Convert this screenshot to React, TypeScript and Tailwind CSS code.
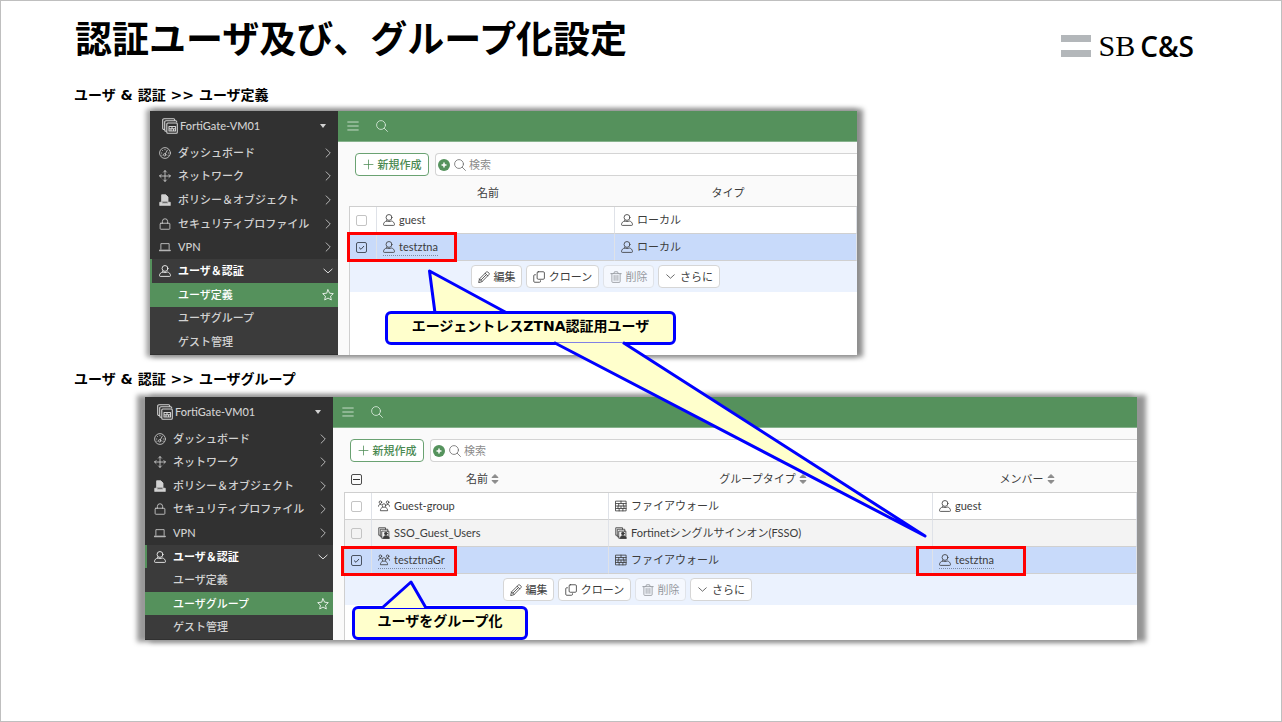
import { type ReactNode } from 'react'
import clsx from 'clsx'

type IconProps = { className?: string }

function Svg({ className, children }: IconProps & { children: ReactNode }) {
  return (
    <svg
      viewBox="0 0 16 16"
      fill="none"
      stroke="currentColor"
      strokeWidth="1.1"
      strokeLinecap="round"
      strokeLinejoin="round"
      className={clsx('shrink-0', className ?? 'size-3')}
      aria-hidden="true"
    >
      {children}
    </svg>
  )
}

const UserIcon = ({ className }: IconProps) => (
  <Svg className={className}>
    <circle cx="8" cy="4.6" r="3.9" />
    <path d="M5 9.300C2.400 9.800.8 11.600.7 14c0 .8.3 1.200 1.100 1.200h12.400c.8 0 1.100-.4 1.100-1.200-.1-2.400-1.700-4.200-4.300-4.700-1.800 1-4.200 1-6 0z" />
  </Svg>
)

const GroupIcon = ({ className }: IconProps) => (
  <Svg className={className}>
    <circle cx="3.200" cy="3" r="1.700" />
    <circle cx="12.800" cy="3" r="1.700" />
    <circle cx="8" cy="7.400" r="2.400" />
    <path d="M.6 8.300c0-1.800 1-2.700 3.600-2.300M15.400 8.300c0-1.800-1-2.700-3.600-2.300M5.800 10c-1.800.5-2.600 1.900-2.600 4.300h9.600c0-2.400-.8-3.800-2.600-4.300" />
  </Svg>
)

const SsoIcon = ({ className }: IconProps) => (
  <Svg className={className}>
    <path d="M3 11H1V1h9v2M5 13H3V3h10v3M5.500 5.500h9v9.500h-9z" />
    <circle cx="10.500" cy="8.700" r="1.800" fill="currentColor" />
    <path d="M7 15c0-2.500 1.500-3.500 3.500-3.500s4.500 1 4.500 3.500z" fill="currentColor" />
  </Svg>
)

const FirewallIcon = ({ className }: IconProps) => (
  <Svg className={className}>
    <path d="M1.200 1.500h13.600v13H1.200zM1.200 4.700h13.600M1.200 8h13.600M1.200 11.300h13.600M8 1.500v3.200M5 4.700V8M11 4.700V8M8 8v3.300M4 8v3.300M12 8v3.300M5.500 11.300v3.200M10.500 11.300v3.200" />
  </Svg>
)

const DeviceIcon = ({ className }: IconProps) => (
  <Svg className={className}>
    <path d="M2.600 11.500H2a1.300 1.300 0 0 1-1.300-1.300V2A1.300 1.300 0 0 1 2 .7h9.500A1.300 1.300 0 0 1 12.800 2M4.300 13.300H4A1.300 1.300 0 0 1 2.700 12V4A1.300 1.300 0 0 1 4 2.700h9.500A1.300 1.300 0 0 1 14.800 4" />
    <rect x="4.800" y="5" width="10.500" height="10.300" rx="1" />
    <path d="M7 8.500h6.500v4.500H7zM7 10.700h6.500M10 8.500v2.200M9 10.700V13M11.500 10.700V13" />
  </Svg>
)

const GaugeIcon = ({ className }: IconProps) => (
  <Svg className={className}>
    <circle cx="8" cy="8" r="7.200" />
    <circle cx="7.600" cy="10.400" r="1.600" />
    <path d="M8.500 9l2.600-4.800M3.300 8h.4M4.700 4.700l.3.300M8 3.300v.4M12.300 8h.4M3.800 11h.3M12 11h.3" />
  </Svg>
)

const MoveIcon = ({ className }: IconProps) => (
  <Svg className={className}>
    <path d="M8 .8v14.400M.8 8h14.400M6 2.800L8 .8l2 2M6 13.200l2 2 2-2M2.800 6L.8 8l2 2M13.200 6l2 2-2 2" />
  </Svg>
)

const PolicyIcon = ({ className }: IconProps) => (
  <Svg className={className}>
    <path d="M3.500 10V1H9l3 3v6z" fill="currentColor" />
    <path d="M1 15v-4h3l1 1.500h6l1-1.500h3v4z" fill="currentColor" />
  </Svg>
)

const LockIcon = ({ className }: IconProps) => (
  <Svg className={className}>
    <rect x="1.500" y="7" width="13" height="8" rx="1" />
    <path d="M4.500 7V4.500a3.500 3.500 0 0 1 7 0V7" />
  </Svg>
)

const LaptopIcon = ({ className }: IconProps) => (
  <Svg className={className}>
    <path d="M2.500 11V3.500h11V11M.8 13h14.400v-.8H.8z" />
  </Svg>
)

const StarIcon = ({ className }: IconProps) => (
  <Svg className={className}>
    <path d="M8 1l2.100 4.600 5 .6-3.700 3.400 1 5L8 12.100l-4.400 2.500 1-5L.9 6.200l5-.6z" />
  </Svg>
)

const SearchIcon = ({ className }: IconProps) => (
  <Svg className={className}>
    <circle cx="6.700" cy="6.700" r="5.900" />
    <path d="M11 11l4.300 4.300" />
  </Svg>
)

const MenuIcon = ({ className }: IconProps) => (
  <Svg className={className}>
    <path d="M1 2.700h14M1 8h14M1 13.300h14" />
  </Svg>
)

const ChevronRight = ({ className }: IconProps) => (
  <Svg className={className}>
    <path d="M5.500 2.500L11 8l-5.500 5.500" />
  </Svg>
)

const ChevronDown = ({ className }: IconProps) => (
  <Svg className={className}>
    <path d="M2.500 5.500L8 10.500l5.500-5" />
  </Svg>
)

const PlusIcon = ({ className }: IconProps) => (
  <Svg className={className}>
    <path d="M8 1.500v13M1.500 8h13" />
  </Svg>
)

const AddFilterIcon = ({ className }: IconProps) => (
  <svg viewBox="0 0 16 16" className={clsx('shrink-0', className)} aria-hidden="true">
    <circle cx="8" cy="8" r="8" fill="#55935d" />
    <path d="M8 4.700v6.600M4.700 8h6.600" stroke="#fff" strokeWidth="2" />
  </svg>
)

const PencilIcon = ({ className }: IconProps) => (
  <Svg className={className}>
    <path d="M1 15l1-4.500L11.300 1.300a1.200 1.200 0 0 1 1.700 0l1.700 1.700a1.200 1.200 0 0 1 0 1.700L5.500 14zM9.500 3l3.500 3.500M3.800 12.200l6.700-6.700M2 10.500L5.500 14" />
  </Svg>
)

const CloneIcon = ({ className }: IconProps) => (
  <Svg className={className}>
    <rect x="5.500" y="1" width="9.700" height="10" rx="1.500" />
    <path d="M3.300 5h-1A1.300 1.300 0 0 0 1 6.300v7.400A1.300 1.300 0 0 0 2.300 15h6.400a1.300 1.300 0 0 0 1.300-1.300V13" />
  </Svg>
)

const TrashIcon = ({ className }: IconProps) => (
  <Svg className={className}>
    <path d="M1 3.500h14M5 3.500L6 1h4l1 2.500M2.500 3.500V14a1.200 1.200 0 0 0 1.200 1.200h8.600a1.200 1.200 0 0 0 1.200-1.200V3.500M5.500 6v6.500M8 6v6.500M10.500 6v6.500" />
  </Svg>
)

const SortIcon = () => (
  <svg
    viewBox="0 0 8 12"
    className="h-3 w-2 shrink-0 fill-[#8b8b8b] stroke-[#8b8b8b]"
    strokeLinejoin="round"
    aria-hidden="true"
  >
    <path d="M4 1.500L7 4.500H1zM4 10.500L1 7.500h6z" />
  </svg>
)

const menu = [
  { label: 'ダッシュボード', Icon: GaugeIcon },
  { label: 'ネットワーク', Icon: MoveIcon },
  { label: 'ポリシー＆オブジェクト', Icon: PolicyIcon },
  { label: 'セキュリティプロファイル', Icon: LockIcon },
  { label: 'VPN', Icon: LaptopIcon },
]

const subMenu = ['ユーザ定義', 'ユーザグループ', 'ゲスト管理']

function Sidebar({ active }: { active: string }) {
  return (
    <nav className="flex w-[188px] shrink-0 flex-col bg-[#313131] pb-px text-[#d2d2d2]">
      <button className="flex h-[30px] items-center pr-3 pl-3 text-left font-medium">
        <DeviceIcon className="size-4" />
        <span className="ml-0.5 flex-1">FortiGate-VM01</span>
        <svg viewBox="0 0 6 4" className="h-1 w-1.5 fill-current" aria-hidden="true">
          <path d="M0 0h6L3 4z" />
        </svg>
      </button>
      <ul className="grid flex-1 auto-rows-fr">
        {menu.map(({ label, Icon }) => (
          <li key={label} className="flex">
            <a href="#" className="flex flex-1 items-center pr-1 pl-[9px]">
              <Icon />
              <span className="ml-[7px] flex-1 font-medium whitespace-nowrap">{label}</span>
              <ChevronRight />
            </a>
          </li>
        ))}
        <li className="flex bg-[#3b3b3b]">
          <a
            href="#"
            className="flex flex-1 items-center border-l-2 border-[#55915c] pr-1 pl-[7px] font-bold text-white"
          >
            <UserIcon />
            <span className="ml-[7px] flex-1">ユーザ＆認証</span>
            <ChevronDown />
          </a>
        </li>
        {subMenu.map((label) => (
          <li key={label} className={clsx('flex', label === active ? 'bg-[#55915c]' : 'bg-[#3b3b3b]')}>
            <a
              href="#"
              className={clsx(
                'flex flex-1 items-center justify-between pr-1 pl-7 font-medium',
                label === active && 'text-white',
              )}
            >
              {label}
              {label === active && <StarIcon />}
            </a>
          </li>
        ))}
      </ul>
    </nav>
  )
}

function Toolbar() {
  return (
    <div className="flex gap-1.5 pt-[11px] pl-[17px]">
      <button className="flex h-[23px] w-[74px] items-center justify-center gap-1 rounded border border-[#6aa272] bg-white font-medium text-[#4a8a52]">
        <PlusIcon className="size-[11px]" />
        新規作成
      </button>
      <div className="flex h-[23px] min-w-0 flex-1 items-center rounded-l border-y border-l border-[#d4d4d4] bg-white pl-0.5">
        <AddFilterIcon className="size-3" />
        <SearchIcon className="ml-1 size-3 text-[#707070]" />
        <input
          type="search"
          aria-label="検索"
          placeholder="検索"
          className="ml-[3px] min-w-0 flex-1 outline-none placeholder:text-[#8c8c8c]"
        />
      </div>
    </div>
  )
}

function Check({ label, checked }: { label: string; checked?: boolean }) {
  return (
    <span className="relative block size-[11px]">
      <input
        type="checkbox"
        aria-label={label}
        defaultChecked={checked}
        className="block size-[11px] appearance-none rounded-[2px] border border-[#c4c4c4] checked:border-[#4a5361]"
      />
      {checked && (
        <svg
          viewBox="0 0 11 11"
          className="pointer-events-none absolute inset-0 size-[11px] fill-none stroke-[#3d4653]"
          aria-hidden="true"
        >
          <path d="M3 5.500l2 1.800 3-3.300" />
        </svg>
      )}
    </span>
  )
}

type Cell = { text: string; Icon?: (p: IconProps) => ReactNode; underline?: boolean }
type Row = { cells: Cell[]; selected?: boolean; striped?: boolean }

type DataTableProps = {
  columns: { label: string; width?: string }[]
  rows: Row[]
  sortable?: boolean
}

function DataTable({ columns, rows, sortable }: DataTableProps) {
  return (
    <table className="w-full table-fixed border-separate border-spacing-0 text-left text-[#3c3c3c]">
      <thead>
        <tr className="h-[31px]">
          <th className="w-7 border-b border-[#cfcfcf] pt-1 pl-[7px]">
            {sortable && (
              <span className="relative block size-[11px]">
                <input
                  type="checkbox"
                  aria-label="すべて選択"
                  className="block size-[11px] appearance-none rounded-[2px] border border-[#4c4c4c]"
                />
                <span className="pointer-events-none absolute top-[5px] left-0.5 h-px w-[7px] bg-[#333]" />
              </span>
            )}
          </th>
          {columns.map(({ label, width }) => (
            <th key={label} className={clsx('border-b border-[#cfcfcf] pt-1 pr-4 font-normal', width)}>
              <span className="flex items-center justify-center gap-[3px]">
                {label}
                {sortable && <SortIcon />}
              </span>
            </th>
          ))}
        </tr>
      </thead>
      <tbody>
        {rows.map(({ cells, selected, striped }) => (
          <tr
            key={cells[0].text}
            className={clsx('h-[27px]', selected ? 'bg-[#c8dafa]' : striped ? 'bg-[#f3f3f3]' : 'bg-white')}
          >
            <td className="border-r border-b border-l border-r-[#dfe2e8] border-b-[#d0d0d0] border-l-[#cfcfcf] pl-1.5">
              <Check label={cells[0].text} checked={selected} />
            </td>
            {cells.map(({ text, Icon, underline }, i) => (
              <td key={i} className="border-r border-b border-r-[#dfe2e8] border-b-[#d0d0d0] pl-1.5">
                {text && (
                  <span
                    className={clsx(
                      'inline-flex h-4 items-center gap-1 border-b border-dotted align-middle whitespace-nowrap',
                      underline ? 'border-[#7f8ba3]' : 'border-transparent',
                    )}
                  >
                    {Icon && <Icon />}
                    {text}
                  </span>
                )}
              </td>
            ))}
          </tr>
        ))}
      </tbody>
    </table>
  )
}

const actionClass =
  'flex h-[23px] items-center justify-center gap-1 rounded border border-[#d6d6d6] bg-white whitespace-nowrap'

function RowActions({ className }: { className: string }) {
  return (
    <div className={clsx('flex h-[31px] items-center gap-1 bg-[#ebf2fe] text-[#3c3c3c]', className)}>
      <button className={clsx(actionClass, 'w-[51px]')}>
        <PencilIcon />
        編集
      </button>
      <button className={clsx(actionClass, 'w-[73px]')}>
        <CloneIcon />
        クローン
      </button>
      <button disabled className={clsx(actionClass, 'w-[51px] opacity-50')}>
        <TrashIcon />
        削除
      </button>
      <button className={clsx(actionClass, 'w-[62px]')}>
        <ChevronDown className="size-[11px]" />
        さらに
      </button>
    </div>
  )
}

type ConsoleProps = DataTableProps & { active: string; actions: string; className: string }

function Console({ active, actions, className, ...table }: ConsoleProps) {
  return (
    <div
      className={clsx(
        "flex overflow-hidden bg-[#fafafa] font-['Lato','Noto_Sans_CJK_JP',sans-serif] text-[11px] leading-4",
        className,
      )}
    >
      <Sidebar active={active} />
      <main className="flex min-w-0 flex-1 flex-col">
        <header className="flex h-[31px] items-center gap-[17px] border-b border-[#86b28c] bg-[#55915c] pl-[9px] text-[#dcebde]">
          <button aria-label="メニュー">
            <MenuIcon />
          </button>
          <button aria-label="検索">
            <SearchIcon />
          </button>
        </header>
        <Toolbar />
        <div className="flex flex-1 flex-col pl-[11px]">
          <DataTable {...table} />
          <div className="flex-1 border-l border-[#cfcfcf] bg-white">
            <RowActions className={actions} />
          </div>
        </div>
      </main>
    </div>
  )
}

function Callout({ className, children }: { className: string; children: ReactNode }) {
  return (
    <p
      className={clsx(
        'absolute flex h-[34px] justify-center rounded-md border-3 border-[#0000ff] bg-[#ffffcc] pt-0.5 text-sm leading-5 font-bold whitespace-nowrap',
        className,
      )}
    >
      {children}
    </p>
  )
}

function Mark({ className }: { className: string }) {
  return <div className={clsx('pointer-events-none absolute h-[30px] border-3 border-[#ff0000]', className)} />
}

const pointerClass = 'pointer-events-none absolute fill-[#ffffcc] stroke-[#0000ff] stroke-3'

export default function App() {
  return (
    <div className="relative min-h-screen bg-white font-['DejaVu_Sans','Noto_Sans_CJK_JP',sans-serif] text-black ring-1 ring-[#bfbfbf] ring-inset">
      <header className="flex h-[85px] items-start justify-between pr-[88px] pl-[75px]">
        <h1 className="pt-4 text-[37px] leading-[50px] font-bold">認証ユーザ及び、グループ化設定</h1>
        <div className="flex items-center pt-[26px] leading-10">
          <svg viewBox="0 0 30 22" className="h-[22px] w-[30px] fill-[#b3b7ba]" aria-hidden="true">
            <path d="M0 0h30v7H0zM0 15h30v7H0z" />
          </svg>
          <span className="ml-[7px] font-['Liberation_Serif',serif] text-[30px]">SB</span>
          <span className="ml-[5px] font-['Open_Sans',sans-serif] text-[28px] font-semibold">C&amp;S</span>
        </div>
      </header>

      <section>
        <h2 className="pl-[74px] text-sm leading-5 font-bold">ユーザ &amp; 認証 &gt;&gt; ユーザ定義</h2>
        <Console
          className="mt-1.5 mr-[425px] ml-[150px] min-h-[244px] shadow-[4px_0_5px_2px_#8f8f8f,-2px_0_5px_2px_#a8a8a8]"
          active="ユーザ定義"
          actions="pl-[121px]"
          columns={[{ label: '名前', width: 'w-[238px]' }, { label: 'タイプ' }]}
          rows={[
            {
              cells: [
                { text: 'guest', Icon: UserIcon },
                { text: 'ローカル', Icon: UserIcon },
              ],
            },
            {
              selected: true,
              cells: [
                { text: 'testztna', Icon: UserIcon, underline: true },
                { text: 'ローカル', Icon: UserIcon },
              ],
            },
          ]}
        />
      </section>

      <section className="pt-[14px]">
        <h2 className="pl-[74px] text-sm leading-5 font-bold">ユーザ &amp; 認証 &gt;&gt; ユーザグループ</h2>
        <Console
          className="mt-2 mr-[145px] ml-[145px] min-h-[243px] shadow-[7px_0_5px_2px_#959595,-6px_0_5px_2px_#999999]"
          active="ユーザグループ"
          actions="pl-[158px]"
          sortable
          columns={[
            { label: '名前', width: 'w-[237px]' },
            { label: 'グループタイプ', width: 'w-[324px]' },
            { label: 'メンバー' },
          ]}
          rows={[
            {
              cells: [
                { text: 'Guest-group', Icon: GroupIcon },
                { text: 'ファイアウォール', Icon: FirewallIcon },
                { text: 'guest', Icon: UserIcon },
              ],
            },
            {
              striped: true,
              cells: [
                { text: 'SSO_Guest_Users', Icon: SsoIcon },
                { text: 'Fortinetシングルサインオン(FSSO)', Icon: SsoIcon },
                { text: '' },
              ],
            },
            {
              selected: true,
              cells: [
                { text: 'testztnaGr', Icon: GroupIcon, underline: true },
                { text: 'ファイアウォール', Icon: FirewallIcon },
                { text: 'testztna', Icon: UserIcon, underline: true },
              ],
            },
          ]}
        />
      </section>

      {/* Callouts */}
      <svg
        viewBox="425 265 85 50"
        className={clsx(pointerClass, 'top-[265px] left-[425px] h-[50px] w-[85px]')}
        aria-hidden="true"
      >
        <path d="M435 313L429.500 271L507 313" strokeLinejoin="round" />
      </svg>
      <Callout className="top-[311px] left-[385px] w-[291px]">エージェントレスZTNA認証用ユーザ</Callout>
      <svg
        viewBox="545 338 385 205"
        className={clsx(pointerClass, 'top-[338px] left-[545px] h-[205px] w-[385px]')}
        aria-hidden="true"
      >
        <path d="M554 342.500L925 536L623 342.500" strokeLinejoin="round" />
      </svg>
      <Callout className="top-[606px] left-[352px] w-[176px]">ユーザをグループ化</Callout>
      <svg
        viewBox="378 576 54 34"
        className={clsx(pointerClass, 'top-[576px] left-[378px] h-[34px] w-[54px]')}
        aria-hidden="true"
      >
        <path d="M382 608L411 582L426 608" strokeLinejoin="round" />
      </svg>

      <Mark className="top-[232px] left-[347px] w-[110px]" />
      <Mark className="top-[546px] left-[341px] w-[116px]" />
      <Mark className="top-[546px] left-[916px] w-[110px]" />
    </div>
  )
}
